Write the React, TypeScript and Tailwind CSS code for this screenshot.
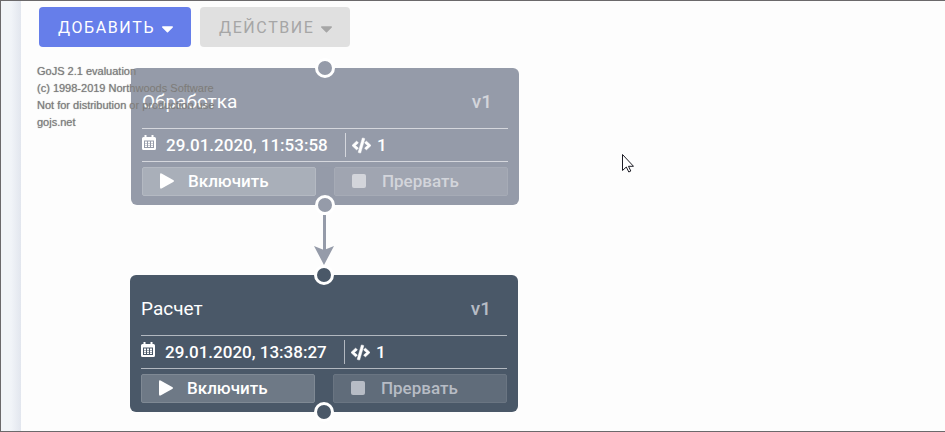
import { FaCaretDown, FaCode } from "react-icons/fa";

type ProcessNode = {
  title: string;
  version: string;
  date: string;
  scripts: number;
  place: string;
  color: string;
  line: string;
  start: string;
  stop: string;
  muted: string;
};

const nodes: ProcessNode[] = [
  {
    title: "Обработка",
    version: "v1",
    date: "29.01.2020, 11:53:58",
    scripts: 1,
    place: "left-[110px] top-[21px]",
    color: "bg-[#959ba9]",
    line: "border-[#d5d7dd]",
    start: "bg-[#a9afb9] border-[#b4b9c2]",
    stop: "bg-[#a0a5b1] border-[#a6abb6]",
    muted: "text-[#d3d5db]",
  },
  {
    title: "Расчет",
    version: "v1",
    date: "29.01.2020, 13:38:27",
    scripts: 1,
    place: "left-[109px] top-[228px]",
    color: "bg-[#4a5868]",
    line: "border-[#b2b8c0]",
    start: "bg-[#6e7986] border-[#7f8994]",
    stop: "bg-[#606c7a] border-[#6a7582]",
    muted: "text-[#b7bcc5]",
  },
];

function CalendarIcon() {
  return (
    <svg viewBox="0 0 14 16" className="mb-1 h-4 w-3.5 shrink-0" aria-hidden="true">
      <path
        fill="currentColor"
        fillRule="evenodd"
        d="M2.500 0h2v2h5V0h2v2h1q1.500 0 1.500 1.500v10q0 1.500-1.500 1.500h-11Q0 15 0 13.500v-10Q0 2 1.500 2h1zM2 5.500v7.500h10V5.500z"
      />
      <path
        fill="currentColor"
        d="M3 6.500h2v1.500H3zM6 6.500h2v1.500H6zM9 6.500h2v1.500H9zM3 8.500h2V10H3zM6 8.500h2V10H6zM9 8.500h2V10H9zM3 10.500h2V12H3zM6 10.500h2V12H6zM9 10.500h2V12H9z"
      />
    </svg>
  );
}

function PlayIcon() {
  return (
    <svg viewBox="0 0 14 16" className="h-4 w-3.5" aria-hidden="true">
      <path
        fill="currentColor"
        d="M0 1.800Q0-.400 2 .700L13.200 7Q14.800 8 13.200 9L2 15.300Q0 16.400 0 14.200z"
      />
    </svg>
  );
}

function Port({ color, edge }: { color: string; edge: string }) {
  return (
    <span
      className={`absolute left-1/2 size-5 -translate-x-1/2 rounded-full border-3 border-white ${color} ${edge}`}
    />
  );
}

function NodeCard({ node }: { node: ProcessNode }) {
  return (
    <article
      className={`absolute w-[388px] rounded-md px-[11px] pb-[9px] font-medium text-white ${node.place} ${node.color}`}
    >
      <Port color={node.color} edge="-top-2.5" />
      <header className="flex h-[60px] items-center justify-between pt-2 pr-4 text-[19px] leading-6">
        <h2 className="font-normal">{node.title}</h2>
        <span className={node.muted}>{node.version}</span>
      </header>
      <div className={`flex h-[34px] items-center border-y text-[17px] leading-6 ${node.line}`}>
        <CalendarIcon />
        <time className="ml-2.5 w-[179px]">{node.date}</time>
        <span className={`flex h-6 items-center gap-1.5 border-l pl-1.5 ${node.line}`}>
          <FaCode className="size-[19px] stroke-current stroke-[16px]" aria-hidden="true" />
          {node.scripts}
        </span>
      </div>
      <div className="mt-[5px] grid grid-cols-2 gap-[18px] text-[17px] leading-6">
        <button
          type="button"
          className={`flex h-[29px] items-center gap-3.5 rounded-xs border pb-0.5 pl-[17px] ${node.start}`}
        >
          <PlayIcon />
          Включить
        </button>
        <button
          type="button"
          disabled
          className={`flex h-[29px] items-center gap-4 rounded-xs border pb-0.5 pl-[17px] ${node.stop} ${node.muted}`}
        >
          <span className="size-3.5 rounded-xs bg-current" />
          Прервать
        </button>
      </div>
      <Port color={node.color} edge="-bottom-2.5" />
    </article>
  );
}

export default function App() {
  return (
    <div className="flex h-screen overflow-hidden border-y border-l border-[#6b696b] bg-[#fdfdfd] font-[Roboto,sans-serif]">
      <aside className="w-5 shrink-0 bg-linear-to-r from-[#f1f4f8] from-50% to-[#e2e6ee]" />
      <main className="flex min-w-0 flex-1 flex-col">
        <div className="flex gap-[9px] pt-1.5 pl-[18px] text-base tracking-widest">
          <button
            type="button"
            className="flex h-10 w-[152px] items-center justify-between rounded bg-[#667eea] pt-0.5 pr-3.5 pl-[19px] text-white"
          >
            ДОБАВИТЬ
            <FaCaretDown className="size-[19px]" aria-hidden="true" />
          </button>
          <button
            type="button"
            disabled
            className="flex h-10 w-[150px] items-center justify-between rounded bg-[#e0e0e0] pt-0.5 pr-3.5 pl-[19px] text-[#a6a6a6]"
          >
            ДЕЙСТВИЕ
            <FaCaretDown className="size-[19px]" aria-hidden="true" />
          </button>
        </div>
        <section className="relative min-h-0 flex-1">
          {nodes.map((node) => (
            <NodeCard key={node.title} node={node} />
          ))}
          <svg
            viewBox="0 0 20 52"
            className="absolute top-[167px] left-[293px] h-[52px] w-5 text-[#959ba9]"
            aria-hidden="true"
          >
            <path d="M10.500 1v36" stroke="currentColor" strokeWidth="3" />
            <path d="M0 32l10 4 10-4-10 19z" fill="currentColor" />
          </svg>
          <p className="pointer-events-none absolute top-4 left-4 font-['Liberation_Sans',Arial,sans-serif] text-[11px] leading-[17px] whitespace-nowrap text-[#7c7c7c] [text-shadow:0_0_1px_#9a9a9a]">
            GoJS 2.1 evaluation
            <br />
            (c) 1998-2019 Northwoods Software
            <br />
            Not for distribution or production use
            <br />
            gojs.net
          </p>
          <svg
            viewBox="0 0 12 19"
            className="pointer-events-none absolute top-[107px] left-[601px] h-[19px] w-3"
            aria-hidden="true"
          >
            <path
              d="M.5.500v16l3.800-3.500 2.500 5 2-1-2.300-4.700h5z"
              fill="#fff"
              stroke="#1c1c24"
            />
          </svg>
        </section>
      </main>
    </div>
  );
}
